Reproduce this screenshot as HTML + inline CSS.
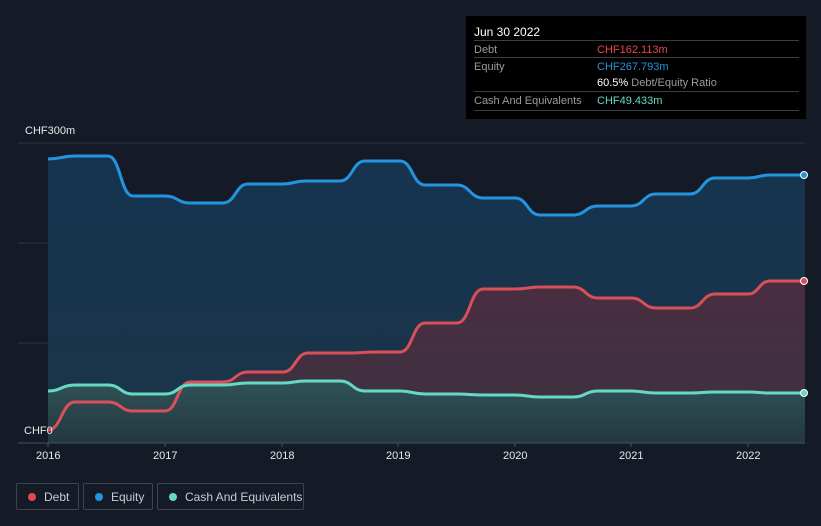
<!DOCTYPE html>
<html><head><meta charset="utf-8"><style>
body{margin:0;width:821px;height:526px;background:#151b26;font-family:"Liberation Sans",sans-serif;overflow:hidden;position:relative}
.tt{position:absolute;left:466px;top:16px;width:340px;height:103px;background:#000;}
.tt .h{position:absolute;left:8px;top:9px;color:#fff;font-size:12px}
.row{position:absolute;left:8px;width:325px;border-top:1px solid #3a3d42;height:17px;font-size:11px;color:#9a9ca0}
.row span{position:absolute;left:123px;top:3px}
.row b{font-weight:normal;position:absolute;left:0;top:3px}
.lg{position:absolute;top:483px;height:27px;border:1px solid #3d4350;border-radius:2px;color:#c9ccd1;font-size:12px;box-sizing:border-box}
.lg i{position:absolute;left:11px;top:9px;width:8px;height:8px;border-radius:50%}
.lg span{position:absolute;left:27px;top:6px}
.ax{position:absolute;top:450px;color:#e8e8e8;font-size:11px}
</style></head><body>
<svg width="821" height="526" style="position:absolute;left:0;top:0">
<defs>
<linearGradient id="ge" x1="0" y1="0" x2="0" y2="1"><stop offset="0" stop-color="#16344f"/><stop offset="1" stop-color="#1b3448"/></linearGradient>
<linearGradient id="gd" x1="0" y1="0" x2="0" y2="1"><stop offset="0" stop-color="#4a2d40"/><stop offset="1" stop-color="#3a3341"/></linearGradient>
<linearGradient id="gc" x1="0" y1="0" x2="0" y2="1"><stop offset="0" stop-color="#2f5357"/><stop offset="1" stop-color="#243740"/></linearGradient>
</defs>
<g stroke="#2c3440" stroke-width="1"><line x1="18" y1="143" x2="805" y2="143"/><line x1="18" y1="243" x2="805" y2="243"/><line x1="18" y1="343" x2="805" y2="343"/></g>
<path id="fe" fill="url(#ge)"/><path id="fd" fill="url(#gd)"/><path id="fc" fill="url(#gc)"/>
<path id="le" fill="none" stroke="#2394e0" stroke-width="3"/>
<path id="ld" fill="none" stroke="#d9505a" stroke-width="3"/>
<path id="lc" fill="none" stroke="#66d9c4" stroke-width="3"/>
<line x1="18" y1="443" x2="805" y2="443" stroke="#4a505a"/>
<g stroke="#4a505a"><line x1="48" y1="443" x2="48" y2="447"/><line x1="165" y1="443" x2="165" y2="447"/><line x1="282" y1="443" x2="282" y2="447"/><line x1="398" y1="443" x2="398" y2="447"/><line x1="515" y1="443" x2="515" y2="447"/><line x1="631" y1="443" x2="631" y2="447"/><line x1="748" y1="443" x2="748" y2="447"/></g>
<circle cx="804" cy="175" r="3.5" fill="#2394e0" stroke="#fff" stroke-width="1"/>
<circle cx="804" cy="281" r="3.5" fill="#d9505a" stroke="#fff" stroke-width="1"/>
<circle cx="804" cy="393" r="3.5" fill="#66d9c4" stroke="#fff" stroke-width="1"/>
</svg>
<script>
function P(a){var d="M"+a[0]+","+a[1];for(var i=2;i<a.length;i+=2){var x0=a[i-2],y0=a[i-1],x=a[i],y=a[i+1],m=(x0+x)/2;d+=" C"+m+","+y0+" "+m+","+y+" "+x+","+y;}return d;}
var E=[48,159,75,156,108,156,133,196,165,196,190,203,223,203,248,184,283,184,305,181,340,181,365,161,400,161,425,185,457,185,483,198,515,198,540,215,573,215,598,206,631,206,656,194,690,194,715,178,748,178,770,175,805,175];
var D=[48,430,75,402,108,402,133,411,165,411,190,382,223,382,248,372,283,372,308,353,350,353,375,352,400,352,425,323,457,323,483,289,515,289,540,287,573,287,598,298,631,298,656,308,690,308,715,294,748,294,770,281,805,281];
var C=[48,391,75,385,108,385,133,394,165,394,190,385,223,385,248,383,283,383,305,381,340,381,365,391,400,391,425,394,457,394,483,395,515,395,540,397,573,397,598,391,631,391,656,393,690,393,715,392,748,392,770,393,805,393];
[["e",E],["d",D],["c",C]].forEach(function(p){var d=P(p[1]);document.getElementById("l"+p[0]).setAttribute("d",d);document.getElementById("f"+p[0]).setAttribute("d",d+" L805,443 L48,443 Z");});
</script>
<div style="position:absolute;left:25px;top:125px;color:#e8e8e8;font-size:11px">CHF300m</div>
<div style="position:absolute;left:24px;top:425px;color:#e8e8e8;font-size:11px">CHF0</div>
<div class="ax" style="left:36px">2016</div><div class="ax" style="left:153px">2017</div><div class="ax" style="left:270px">2018</div><div class="ax" style="left:386px">2019</div><div class="ax" style="left:503px">2020</div><div class="ax" style="left:619px">2021</div><div class="ax" style="left:736px">2022</div>
<div class="tt"><div class="h">Jun 30 2022</div>
<div class="row" style="top:24px"><b>Debt</b><span style="color:#e5474f">CHF162.113m</span></div>
<div class="row" style="top:41px"><b>Equity</b><span style="color:#2394e0">CHF267.793m</span></div>
<div class="row" style="top:58px;border-top:none"><span><span style="position:static;color:#fff">60.5%</span> Debt/Equity Ratio</span></div>
<div class="row" style="top:75px;height:18px;border-bottom:1px solid #3a3d42"><b>Cash And Equivalents</b><span style="color:#66d9c4">CHF49.433m</span></div>
</div>
<div class="lg" style="left:16px;width:63px"><i style="background:#e5474f"></i><span>Debt</span></div>
<div class="lg" style="left:83px;width:70px"><i style="background:#2394e0"></i><span>Equity</span></div>
<div class="lg" style="left:157px;width:147px"><i style="background:#66d9c4"></i><span>Cash And Equivalents</span></div>
</body></html>
